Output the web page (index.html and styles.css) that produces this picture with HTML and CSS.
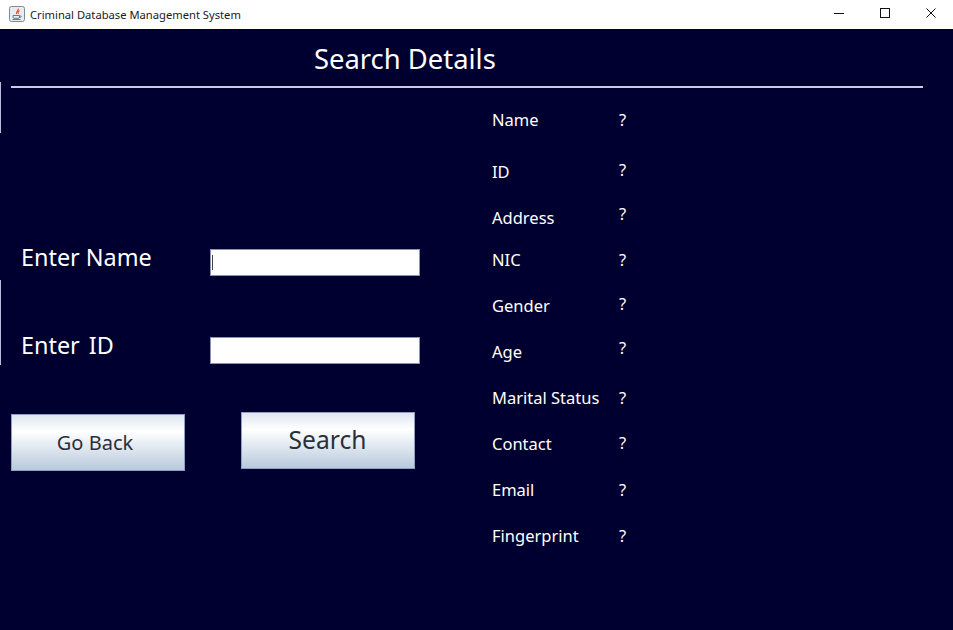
FILE: index.html
```html
<!DOCTYPE html>
<html lang="en">
<head>
<meta charset="utf-8">
<title>Criminal Database Management System</title>
<link rel="stylesheet" href="styles.css">
</head>
<body>
<div class="window">
  <header class="titlebar">
    <svg class="app-icon" width="16" height="16" viewBox="0 0 16 16" aria-hidden="true">
      <rect x="0.5" y="0.5" width="15" height="15" rx="2" fill="#e9ecef" stroke="#7d8b99"/>
      <path d="M9 2.5C10.5 4.5 6.5 5.5 7.5 8M10.5 4.5C9 5.5 8.5 6.5 9.5 8" fill="none" stroke="#d8542a" stroke-width="1.1"/>
      <path d="M4 9.5h6.5v1.6c0 .8-.6 1.2-1.2 1.2H5.2c-.6 0-1.2-.4-1.2-1.2zM10.5 10h1.2c.9 0 .9 1.4-1.2 1.5" fill="none" stroke="#47708f" stroke-width="0.9"/>
      <path d="M3.5 13.5h8" stroke="#47708f" stroke-width="0.9"/>
    </svg>
    <span class="title">Criminal Database Management System</span>
    <div class="controls">
      <svg width="10" height="10" viewBox="0 0 10 10" aria-hidden="true"><path d="M0 5.5h10" stroke="#111" stroke-width="1"/></svg>
      <svg width="10" height="10" viewBox="0 0 10 10" aria-hidden="true"><rect x="0.5" y="0.5" width="9" height="9" fill="none" stroke="#111"/></svg>
      <svg width="10" height="10" viewBox="0 0 10 10" aria-hidden="true"><path d="M0.5 0.5l9 9M9.5 0.5l-9 9" stroke="#111" stroke-width="1"/></svg>
    </div>
  </header>
  <main class="content">
    <h1 class="heading">Search Details</h1>
    <hr class="rule">
    <div class="columns">
      <section class="search">
        <div class="field">
          <label class="field-label" for="name">Enter Name</label>
          <input class="field-input caret" id="name" type="text">
        </div>
        <div class="field">
          <label class="field-label label-id" for="id">Enter ID</label>
          <input class="field-input" id="id" type="text">
        </div>
        <div class="actions">
          <button class="btn btn-back" type="button">Go Back</button>
          <button class="btn btn-search" type="button">Search</button>
        </div>
      </section>
      <section class="details">
        <div class="labels">
          <div class="item">Name</div>
          <div class="item">ID</div>
          <div class="item">Address</div>
          <div class="item">NIC</div>
          <div class="item">Gender</div>
          <div class="item">Age</div>
          <div class="item">Marital Status</div>
          <div class="item">Contact</div>
          <div class="item">Email</div>
          <div class="item">Fingerprint</div>
        </div>
        <div class="values">
          <div class="item">?</div>
          <div class="item">?</div>
          <div class="item">?</div>
          <div class="item">?</div>
          <div class="item">?</div>
          <div class="item">?</div>
          <div class="item">?</div>
          <div class="item">?</div>
          <div class="item">?</div>
          <div class="item">?</div>
        </div>
      </section>
    </div>
  </main>
</div>
</body>
</html>
```
FILE: styles.css
```css
* { box-sizing: border-box; }
html, body { margin: 0; height: 100%; overflow: hidden; }
body { font-family: "Noto Sans", "DejaVu Sans", sans-serif; background: #000030; }
.window { width: 953px; height: 630px; display: flex; flex-direction: column; }
.titlebar { height: 29px; flex: none; background: #fff; display: flex; align-items: center; padding-left: 9px; }
.app-icon { flex: none; margin-top: -1px; }
.title { margin-left: 5px; font-size: 11.2px; color: #1a1a1a; margin-top: -1px; }
.controls { margin-left: auto; display: flex; align-items: center; gap: 36px; padding-right: 17px; margin-top: -3px; }
.content { flex: 1; padding: 0 30px 0 11px; color: #fff;
  background:
    linear-gradient(to bottom,
      #000030 0, #000030 53px,
      #b9bddc 53px, #b9bddc 104px,
      #000030 104px, #000030 251px,
      #b9bddc 251px, #b9bddc 336px,
      #000030 336px) no-repeat 0 0 / 1px 100%,
    #000030; }
.heading { margin: 12px 0 0; padding-left: 303px; font-size: 27.4px; line-height: 36px; font-weight: 400; }
.rule { margin: 9px 0 0; height: 2px; border: 0; background: #c8cdea; }
.columns { display: flex; }
.search { width: 481px; flex: none; }
.field { display: flex; align-items: flex-start; margin-top: 52px; }
.field:first-child { margin-top: 152px; }
.field-label { width: 199px; padding-left: 10px; font-size: 23.4px; line-height: 34px; color: #fff; }
.label-id { word-spacing: 3px; }
.field-input { width: 210px; height: 27px; margin-top: 9px; border: 1px solid #8a92b8; background: #fff; padding: 0 1px; outline: 0; }
.caret { background: linear-gradient(#444, #444) no-repeat 1px center / 1px 15px, #fff; }
.actions { display: flex; align-items: flex-start; margin-top: 48px; }
.btn { width: 174px; border: 1px solid #8f9fc0; color: #2a2f38; font-family: inherit; padding: 0;
  background: linear-gradient(#dfe6f1 0%, #ffffff 30%, #dbe4ee 65%, #b8c9dc 100%); }
.btn-back { height: 57px; margin-top: 2px; font-size: 20px; padding: 0 6px 1px 0; }
.btn-search { height: 57px; margin-left: 56px; font-size: 24.6px; padding: 0 1px 2px 0; }
.details { display: flex; padding-top: 20px; }
.labels { width: 127px; }
.values { width: 30px; }
.item { height: 24px; line-height: 24px; font-size: 16.5px; white-space: nowrap; }
.labels .item:nth-child(n+2) { margin-top: 22px; }
.labels .item:nth-child(2) { margin-top: 28px; }
.labels .item:nth-child(4) { margin-top: 18px; }
.values .item:nth-child(n+2) { margin-top: 21px; }
.values .item:nth-child(2) { margin-top: 26px; }
.values .item:nth-child(3) { margin-top: 20px; }
.values .item:nth-child(4) { margin-top: 22px; }
.values .item:nth-child(5) { margin-top: 20px; }
.values .item:nth-child(6) { margin-top: 20px; }
.values .item:nth-child(7) { margin-top: 26px; }
.values .item:nth-child(9) { margin-top: 23px; }
.values .item:nth-child(10) { margin-top: 22px; }
```
